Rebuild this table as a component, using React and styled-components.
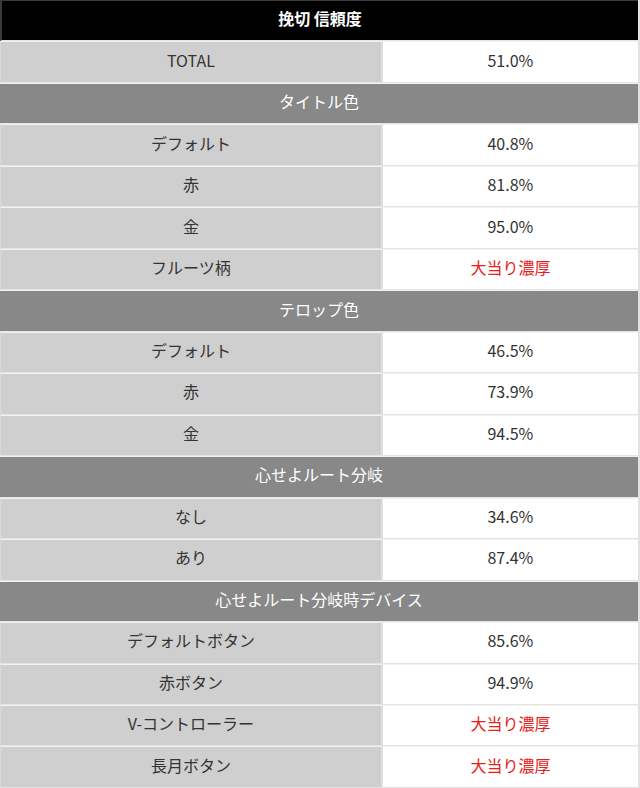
import React from 'react';
import styled, { createGlobalStyle } from 'styled-components';

const GlobalStyle = createGlobalStyle`
  html, body {
    margin: 0;
    padding: 0;
    background: #ffffff;
  }
  body {
    font-family: "Noto Sans CJK JP", "Noto Sans", sans-serif;
  }
`;

const sections = [
  { type: 'row', label: 'TOTAL', value: '51.0%' },
  { type: 'section', label: 'タイトル色' },
  { type: 'row', label: 'デフォルト', value: '40.8%' },
  { type: 'row', label: '赤', value: '81.8%' },
  { type: 'row', label: '金', value: '95.0%' },
  { type: 'row', label: 'フルーツ柄', value: '大当り濃厚', hot: true },
  { type: 'section', label: 'テロップ色' },
  { type: 'row', label: 'デフォルト', value: '46.5%' },
  { type: 'row', label: '赤', value: '73.9%' },
  { type: 'row', label: '金', value: '94.5%' },
  { type: 'section', label: '心せよルート分岐' },
  { type: 'row', label: 'なし', value: '34.6%' },
  { type: 'row', label: 'あり', value: '87.4%' },
  { type: 'section', label: '心せよルート分岐時デバイス' },
  { type: 'row', label: 'デフォルトボタン', value: '85.6%' },
  { type: 'row', label: '赤ボタン', value: '94.9%' },
  { type: 'row', label: 'V-コントローラー', value: '大当り濃厚', hot: true },
  { type: 'row', label: '長月ボタン', value: '大当り濃厚', hot: true },
];

const App = () => {
  return (
    <>
      <GlobalStyle />
      <Table>
        <colgroup>
          <col style={{ width: '60%' }} />
          <col style={{ width: '40%' }} />
        </colgroup>
        <tbody>
          <tr>
            <Title colSpan={2}>挽切 信頼度</Title>
          </tr>
          {sections.map((item, i) =>
            item.type === 'section' ? (
              <tr key={i}>
                <Section colSpan={2}>{item.label}</Section>
              </tr>
            ) : (
              <tr key={i}>
                <Label>{item.label}</Label>
                <Value $hot={item.hot}>{item.value}</Value>
              </tr>
            )
          )}
        </tbody>
      </Table>
    </>
  );
};

export default App;

const Table = styled.table`
  width: 640px;
  table-layout: fixed;
  border-collapse: separate;
  border-spacing: 0;
  border-right: 2px solid #e2e2e2;
`;

const Cell = styled.td`
  box-sizing: border-box;
  height: 41.47px;
  padding: 0 0 5px;
  text-align: center;
  vertical-align: middle;
  font-size: 16px;
  line-height: 1;
  border-bottom: 1px solid #e4e4e4;
  border-top: 1px solid #f2f2f2;
`;

const Title = styled(Cell)`
  background: #000000;
  color: #ffffff;
  font-weight: bold;
  border-left: 2px solid #3a3a3a;
  border-top: 1px solid #3a3a3a;
`;

const Section = styled(Cell)`
  background: #888888;
  color: #ffffff;
`;

const Label = styled(Cell)`
  background: #cfcfcf;
  color: #333333;
  border-right: 2px solid #e0e0e0;
  border-left: 1px solid #d8d8d8;
`;

const Value = styled(Cell)`
  background: #ffffff;
  color: ${(p) => (p.$hot ? '#e8201a' : '#333333')};
`;
